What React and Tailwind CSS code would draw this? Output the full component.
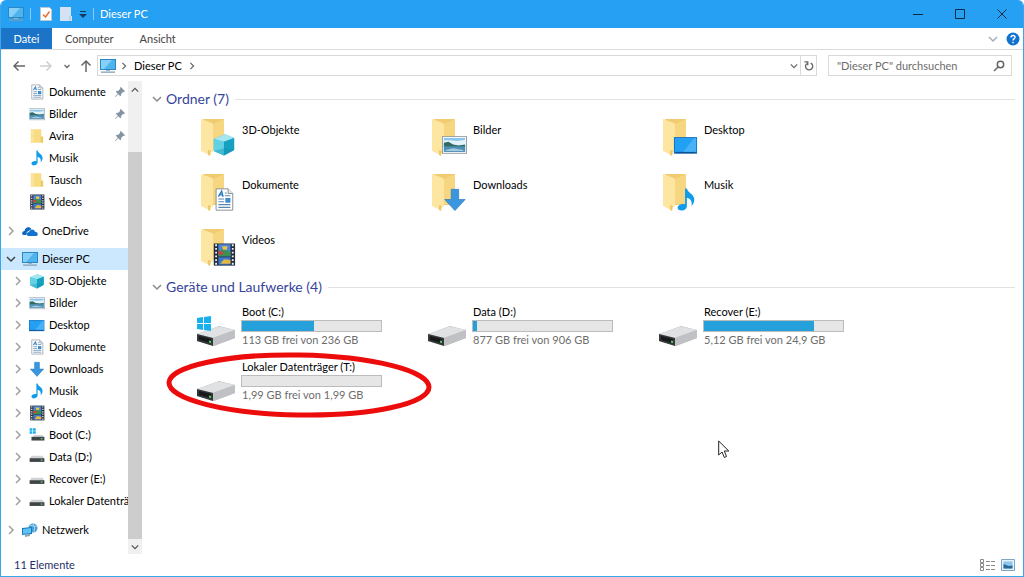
import React, { useState } from "react";

const quickAccess = [
  { name: "Dokumente", icon: "doc", pinned: true },
  { name: "Bilder", icon: "picture", pinned: true },
  { name: "Avira", icon: "folder", pinned: true },
  { name: "Musik", icon: "music" },
  { name: "Tausch", icon: "folder" },
  { name: "Videos", icon: "video" },
];

const pcChildren = [
  { name: "3D-Objekte", icon: "cube" },
  { name: "Bilder", icon: "picture" },
  { name: "Desktop", icon: "desktop" },
  { name: "Dokumente", icon: "doc" },
  { name: "Downloads", icon: "download" },
  { name: "Musik", icon: "music" },
  { name: "Videos", icon: "video" },
  { name: "Boot (C:)", icon: "bootDrive" },
  { name: "Data (D:)", icon: "drive" },
  { name: "Recover (E:)", icon: "drive" },
  { name: "Lokaler Datenträger (T:)", icon: "drive" },
];

const folders = [
  { name: "3D-Objekte", icon: "cube" },
  { name: "Bilder", icon: "picture" },
  { name: "Desktop", icon: "desktop" },
  { name: "Dokumente", icon: "doc" },
  { name: "Downloads", icon: "download" },
  { name: "Musik", icon: "music" },
  { name: "Videos", icon: "video" },
];

const drives = [
  { name: "Boot (C:)", free: "113 GB frei von 236 GB", used: 52, windows: true },
  { name: "Data (D:)", free: "877 GB frei von 906 GB", used: 3 },
  { name: "Recover (E:)", free: "5,12 GB frei von 24,9 GB", used: 79 },
  { name: "Lokaler Datenträger (T:)", free: "1,99 GB frei von 1,99 GB", used: 0, marked: true },
];

function Chevron({ dir = "right", className = "size-2.5" }) {
  const paths = {
    right: "M3 1l4 4-4 4",
    down: "M1 3l4 4 4-4",
    up: "M1 7l4-4 4 4",
  };
  return (
    <svg viewBox="0 0 10 10" className={`shrink-0 ${className}`} fill="none" stroke="currentColor">
      <path d={paths[dir]} strokeWidth="1.5" />
    </svg>
  );
}

function MonitorIcon({ className }) {
  return (
    <svg viewBox="0 0 16 16" className={className}>
      <rect x="0.5" y="1.5" width="15" height="10" fill="#4fb3ee" stroke="#2b87c4" />
      <path d="M1 2h11l-8 9H1z" fill="#84d0f8" />
      <path d="M6 12h4v1H6z" fill="#9db4c4" />
      <path d="M1 13.5h14v1.2H1z" fill="#7c9db3" />
    </svg>
  );
}

// Drawn on a 24x24 grid, used both in the tree and over the large folders
const glyphs = {
  cube: (
    <>
      <path d="M1 6l12-5 10 4v13l-11 6-11-5z" fill="#35bdd6" />
      <path d="M1 6l12-5 10 4-11 4z" fill="#a5e7f1" />
      <path d="M1 6l11 3v15l-11-5z" fill="#62d1e3" />
      <path d="M12 9l11-4v13l-11 6z" fill="#18a0c0" />
      <path d="M12 16l11 2-11 6-11-5z" fill="#0b8fb2" opacity=".35" />
    </>
  ),
  picture: (
    <>
      <rect x="-1.5" y="3.5" width="26" height="18" fill="#fff" stroke="#8d9aa3" />
      <path d="M0 5h23v15H0z" fill="#8cc6ec" />
      <path d="M0 8c6-2 11 2 23-1v6H0z" fill="#e4f2f9" />
      <path d="M0 10l5-1 5 3 6 1 7-1v3H0z" fill="#2f6b62" />
      <path d="M0 14h23v6H0z" fill="#508fb5" />
      <path d="M2 18l8-2 11 2v1H2z" fill="#a2cbdd" />
    </>
  ),
  desktop: (
    <>
      <rect x="-1" y="4" width="25" height="18" fill="#1b6fb7" />
      <path d="M0 5h23v15H0z" fill="#22a0f4" />
      <path d="M9 20L21 5h2v15z" fill="#48b2f9" />
      <path d="M1 20h21v1H1z" fill="#0e4c86" />
    </>
  ),
  doc: (
    <>
      <path d="M3.500 0.500h13l5 5v18h-18z" fill="#fff" stroke="#7f8a92" />
      <path d="M16.500 0.500v5h5" fill="#e5eaee" stroke="#7f8a92" />
      <path d="M6 9l3.500-6L11 9M7.500 7h3" fill="none" stroke="#2e7fc4" strokeWidth="1.600" />
      <path d="M13 5h2M13 8h6M6 11.500h6M6 14.500h6M6 17.500h13M6 20.500h13" stroke="#5c88b0" strokeWidth="1.200" />
      <path d="M13.500 10.500h5.500v5h-5.500z" fill="#3f8ccb" />
    </>
  ),
  download: (
    <path d="M8 1h8v11h7L12 24 1 12h7z" fill="#3b96e0" stroke="#2374bd" strokeWidth=".7" />
  ),
  music: (
    <path
      d="M11 0h2c1 5 8 6 8 12 0 3-1 5-3 7 1-5-1-8-5-9v9c0 3-3 5-6 5-2.500 0-4-1.500-4-3 0-3 4-5 8-4z"
      fill="#129bea"
    />
  ),
  video: (
    <>
      <path d="M1 0h23v24H1z" fill="#252c3b" />
      <path d="M6 1h13v13H6z" fill="#4b86d8" />
      <path d="M6 15h13v8H6z" fill="#3a78cf" />
      <path d="M6 9l5-3 8 3v5H6z" fill="#3d9051" />
      <path d="M10 3h6l-1 4h-4z" fill="#edc34a" />
      <path d="M6 8l5 1v3H6z" fill="#cf4141" />
      <path d="M8 22l4-5 7 1v4z" fill="#e3b744" />
      <path d="M3.500 1v22M21.500 1v22" stroke="#eef2f5" strokeWidth="2" strokeDasharray="2 2" />
    </>
  ),
  folder: (
    <>
      <path d="M2 1h17v22H2z" fill="#f8dc83" />
      <path d="M18 13h4v10h-4z" fill="#efca63" />
      <path d="M2 1h5v22H2z" fill="#fbe49a" />
    </>
  ),
  drive: (
    <>
      <path d="M3 10h18l3 5H0z" fill="#d0d3d5" />
      <path d="M0 14h24v6H0z" fill="#3f4447" />
      <path d="M18 16h3v2h-3z" fill="#5ed17c" />
    </>
  ),
  bootDrive: (
    <>
      <path d="M0 1h4v4H0zM5 1h5v4H5zM0 6h4v4H0zM5 6h5v4H5z" fill="#1fb0ee" />
      <path d="M7 12h14l3 4H4z" fill="#d0d3d5" />
      <path d="M3 15h21v6H3z" fill="#3f4447" />
      <path d="M18 17h3v2h-3z" fill="#5ed17c" />
    </>
  ),
};

function SmallIcon({ name }) {
  return (
    <svg viewBox="-1 0 26 24" className="size-4 shrink-0">
      {glyphs[name]}
    </svg>
  );
}

function FolderIcon({ name }) {
  return (
    <svg viewBox="0 0 40 42" className="h-[42px] w-10 shrink-0">
      <path d="M3 2h21v31H8z" fill="#f0cb70" />
      <path d="M13 7L24 2v30H13z" fill="#f6d680" />
      <path d="M1 2l11 4c1 1 1 2 1 3v26l-3-1-1 4L1 34z" fill="#fce6a2" />
      <path d="M8 33l3 1-1 5-2-1z" fill="#f0c966" />
      <svg x="11" y="15" width="25" height="25" viewBox="-2 0 27 24">
        {glyphs[name]}
      </svg>
    </svg>
  );
}

function DriveIcon({ windows }) {
  return (
    <svg viewBox="0 0 40 32" className="h-8 w-10 shrink-0">
      <path d="M1 18l22-8 16 4v8L18 30 1 25z" fill="#b9bcbf" />
      <path d="M1 18l20-7q2-.6 4 0l14 3-22 8z" fill="#dfe1e3" />
      <path d="M17 22l22-8v8l-22 8z" fill="#bfc1c4" />
      <path d="M1 18l16 4v8L1 25z" fill="#34383a" />
      <path d="M3 20l12 3v4L3 24z" fill="#17191a" />
      <path d="M13 24.500l2 .5v2l-2-.5z" fill="#55d95f" />
      {windows && (
        <path d="M1 2l6-1v6H1zM8 1l7-1v7H8zM1 8h6v6l-6-1zM8 8h7v7l-7-1z" fill="#16b1ee" />
      )}
    </svg>
  );
}

function Pin() {
  return (
    <svg viewBox="0 0 12 12" className="ml-auto mr-[3px] size-2.5 shrink-0" fill="#8393a3">
      <path d="M7 0l5 5-1 1-1-.3L7.500 8l-.2 2.300-1 .7L4 8.600.5 12 0 11.500 3.400 8 1 5.700l.7-1L4 4.500 6.300 2 6 1z" />
    </svg>
  );
}

function TreeItem({ name, icon, pinned, level = 1, expandable = true, open, selected }) {
  return (
    <button
      type="button"
      className={`flex h-[22px] w-full items-center overflow-hidden text-left whitespace-nowrap ${
        level === 0 ? "pl-[5px]" : "pl-3"
      } ${selected ? "bg-[#cce8ff]" : "hover:bg-[#e5f3ff]"}`}
    >
      {expandable ? (
        <Chevron
          dir={open ? "down" : "right"}
          className={open ? "size-2.5 text-[#404040]" : "size-2.5 text-[#a0a0a0]"}
        />
      ) : (
        <span className="w-2.5 shrink-0" />
      )}
      <span className="mr-1 ml-1.5 flex shrink-0">
        {icon === "pc" && <MonitorIcon className="size-4" />}
        {icon === "onedrive" && (
          <svg viewBox="0 0 16 16" className="size-4">
            <path d="M1 12c-1.500-1-1-4 1.500-4 .5-4 5-5 7-2l-3 2c-2 1-2.500 3-1.500 4z" fill="#0f68bd" />
            <path d="M6 13c-2-1-1.500-4 1-4 1-3 5-3.500 6-.3 3 0 3.500 3.500 1.500 4.300z" fill="#0f73cf" />
          </svg>
        )}
        {icon === "network" && (
          <svg viewBox="0 0 16 16" className="size-4">
            <circle cx="11" cy="6" r="4.500" fill="#4a9fd8" />
            <path d="M8 3q4 2 7 1M11 2q3 4 1 8" stroke="#a5d8f3" fill="none" />
            <path d="M0 6l10-1v7l-10 1z" fill="#1e78b8" />
            <path d="M1 7l8-1v5l-8 1z" fill="#5cc3f5" />
            <path d="M3 13l5-1v2l-5 1z" fill="#86a7ba" />
          </svg>
        )}
        {glyphs[icon] && <SmallIcon name={icon} />}
      </span>
      <span>{name}</span>
      {pinned && <Pin />}
    </button>
  );
}

function TitleBar() {
  return (
    <header className="flex h-7 items-center bg-[#26a0f2] pl-[7px] text-white">
      <MonitorIcon className="size-4" />
      <span className="ml-1.5 h-3 w-px bg-[#8bcbf7]" />
      <button type="button" aria-label="Eigenschaften" className="ml-[9px]">
        <svg viewBox="0 0 12 14" className="h-3.5 w-3">
          <path d="M.5.5h9l2 2v11H.5z" fill="#fff" stroke="#b7c9d8" />
          <path d="M3 7.500l2.500 2.500L9.500 4.500" fill="none" stroke="#e8743b" strokeWidth="1.600" />
        </svg>
      </button>
      <button type="button" aria-label="Neuer Ordner" className="ml-2">
        <svg viewBox="0 0 12 14" className="h-3.5 w-3">
          <path d="M0 0h11v9h1v5H0z" fill="#d5e2f3" />
          <path d="M9 9h2v5H9z" fill="#bdd1e9" />
        </svg>
      </button>
      <button type="button" aria-label="Symbolleiste anpassen" className="ml-[7px]">
        <svg viewBox="0 0 8 8" className="size-2" fill="#123a5c">
          <path d="M1 1h6v1H1zM0 4h8L4 8z" />
        </svg>
      </button>
      <span className="ml-1.5 h-3 w-px bg-[#8bcbf7]" />
      <h1 className="ml-1.5">Dieser PC</h1>
      <div className="ml-auto flex text-[#10293d]">
        <button type="button" aria-label="Minimieren" className="flex h-7 w-[42px] items-center justify-center">
          <svg viewBox="0 0 10 10" className="size-2.5">
            <path d="M0 5.500h10" stroke="currentColor" />
          </svg>
        </button>
        <button type="button" aria-label="Maximieren" className="flex h-7 w-[42px] items-center justify-center">
          <svg viewBox="0 0 10 10" className="size-2.5">
            <path d="M.5.5h9v9h-9z" stroke="currentColor" fill="none" />
          </svg>
        </button>
        <button type="button" aria-label="Schließen" className="flex h-7 w-[42px] items-center justify-center">
          <svg viewBox="0 0 10 10" className="size-2.5">
            <path d="M.5.5l9 9M9.500.5l-9 9" stroke="currentColor" />
          </svg>
        </button>
      </div>
    </header>
  );
}

function Ribbon() {
  return (
    <nav className="flex h-[22px] items-stretch border-b border-[#dadbdc] text-[#444]">
      <button type="button" className="w-[51px] bg-[#1b74c8] text-white">
        Datei
      </button>
      <button type="button" className="ml-[13px]">
        Computer
      </button>
      <button type="button" className="ml-[26px]">
        Ansicht
      </button>
      <button type="button" aria-label="Menüband erweitern" className="ml-auto text-[#a3afba]">
        <Chevron dir="down" />
      </button>
      <button type="button" aria-label="Hilfe" className="mr-[3px] ml-2">
        <svg viewBox="0 0 14 14" className="size-3.5">
          <circle cx="7" cy="7" r="6.500" fill="#1272cf" />
          <path d="M5 5.500c0-3 4.500-2.500 4 0C8.800 6.700 7 6.700 7 8.500M7 9.700v1.500" fill="none" stroke="#fff" strokeWidth="1.400" />
        </svg>
      </button>
    </nav>
  );
}

function AddressRow() {
  const [query, setQuery] = useState("");

  return (
    <div className="flex h-[31px] shrink-0 items-center pr-[11px] pl-3 text-[#666]">
      <button type="button" aria-label="Zurück">
        <svg viewBox="0 0 12 12" className="size-3" fill="none" stroke="currentColor" strokeWidth="1.500">
          <path d="M12 6H1M5.500 1.500L1 6l4.500 4.500" />
        </svg>
      </button>
      <button type="button" aria-label="Vorwärts" className="ml-[15px] text-[#cfcfcf]">
        <svg viewBox="0 0 12 12" className="size-3" fill="none" stroke="currentColor" strokeWidth="1.500">
          <path d="M0 6h11M6.500 1.500L11 6l-4.500 4.500" />
        </svg>
      </button>
      <button type="button" aria-label="Verlauf" className="ml-[11px]">
        <svg viewBox="0 0 8 8" className="size-2" fill="none" stroke="currentColor">
          <path d="M1.500 3L4 5.500 6.500 3" strokeWidth="1.300" />
        </svg>
      </button>
      <button type="button" aria-label="Nach oben" className="ml-[9px]">
        <svg viewBox="0 0 12 12" className="size-3" fill="none" stroke="currentColor" strokeWidth="1.500">
          <path d="M6 12V1M1.500 5.500L6 1l4.500 4.500" />
        </svg>
      </button>
      <div className="ml-[5px] flex h-[21px] flex-1 items-center border border-[#d9d9d9] pl-0.5">
        <MonitorIcon className="size-4" />
        <Chevron className="ml-1 size-2" />
        <button type="button" className="ml-1.5 text-black">
          Dieser PC
        </button>
        <Chevron className="ml-1.5 size-2" />
        <button type="button" aria-label="Adressverlauf" className="mr-0.5 ml-auto">
          <Chevron dir="down" className="size-2" />
        </button>
        <button
          type="button"
          aria-label="Aktualisieren"
          className="flex h-full w-4 items-center justify-center border-l border-[#d9d9d9]"
        >
          <svg viewBox="0 0 12 12" className="size-2.5" fill="none" stroke="currentColor" strokeWidth="1.600">
            <path d="M8 2.500A4.300 4.300 0 1 1 3.500 3M.5 1h4v4" />
          </svg>
        </button>
      </div>
      <label className="ml-[11px] flex h-[21px] w-[184px] items-center border border-[#d9d9d9] pr-1.5 pl-2">
        <input
          type="text"
          aria-label="Dieser PC durchsuchen"
          value={query}
          onChange={(e) => setQuery(e.target.value)}
          placeholder={'"Dieser PC" durchsuchen'}
          className="min-w-0 flex-1 outline-none placeholder:text-[#6d6d6d]"
        />
        <svg viewBox="0 0 12 12" className="size-3" fill="none" stroke="currentColor" strokeWidth="1.500">
          <circle cx="7.500" cy="4.500" r="3.200" />
          <path d="M5 7L1 11" />
        </svg>
      </label>
    </div>
  );
}

function Sidebar() {
  return (
    <aside className="flex w-[141px] shrink-0">
      <nav className="min-w-0 flex-1">
        {quickAccess.map((item) => (
          <TreeItem key={item.name} {...item} expandable={false} />
        ))}
        <div className="mt-[7px]">
          <TreeItem name="OneDrive" icon="onedrive" level={0} />
        </div>
        <div className="mt-1.5">
          <TreeItem name="Dieser PC" icon="pc" level={0} open selected />
          {pcChildren.map((item) => (
            <TreeItem key={item.name} {...item} />
          ))}
        </div>
        <div className="mt-[7px]">
          <TreeItem name="Netzwerk" icon="network" level={0} />
        </div>
      </nav>
      <div className="flex w-3.5 flex-col items-center bg-[#f0f0f0] text-[#505050]">
        <button type="button" aria-label="Nach oben blättern" className="flex h-[18px] items-center">
          <Chevron dir="up" className="size-2" />
        </button>
        <div className="mt-[53px] w-full flex-1 bg-[#cdcdcd]" />
        <button type="button" aria-label="Nach unten blättern" className="flex h-[15px] items-center">
          <Chevron dir="down" className="size-2" />
        </button>
      </div>
    </aside>
  );
}

function GroupHeading({ children }) {
  return (
    <div className="flex h-5 items-center">
      <Chevron dir="down" className="size-2.5 text-[#8a8a8a]" />
      <h2 className="ml-1 text-sm text-[#36459b]">{children}</h2>
      <span className="ml-1.5 h-px flex-1 bg-[#e2e2e2]" />
    </div>
  );
}

function DriveTile({ name, free, used, windows, marked }) {
  return (
    <button type="button" className="relative flex h-[55px] items-start text-left">
      <span className="mt-3 mr-[5px] flex">
        <DriveIcon windows={windows} />
      </span>
      <span className="flex w-[141px] flex-col">
        <span className="pl-px leading-4">{name}</span>
        <span className="flex h-3 border border-[#bcbcbc] bg-[#e6e6e6]">
          <span className="bg-[#26a0da]" style={{ width: `${used}%` }} />
        </span>
        <span className="pl-px leading-4 text-[#6d6d6d]">{free}</span>
      </span>
      {marked && (
        <svg
          viewBox="0 0 266 68"
          className="pointer-events-none absolute -top-2 -left-[30px] h-[68px] w-[266px]"
          fill="none"
        >
          <ellipse cx="133" cy="34" rx="130" ry="30" stroke="#ed0c0c" strokeWidth="5" transform="rotate(1 133 34)" />
        </svg>
      )}
    </button>
  );
}

function Content() {
  return (
    <main className="relative min-w-0 flex-1 pt-2 pr-2 pl-2.5">
      <section>
        <GroupHeading>Ordner (7)</GroupHeading>
        <div className="mt-2 grid grid-cols-[repeat(auto-fill,231px)] pl-12">
          {folders.map((folder) => (
            <button key={folder.name} type="button" className="flex h-[55px] items-start text-left">
              <FolderIcon name={folder.icon} />
              <span className="mt-[5px] ml-0.5 leading-4">{folder.name}</span>
            </button>
          ))}
        </div>
      </section>
      <section className="-mt-[5px]">
        <GroupHeading>Geräte und Laufwerke (4)</GroupHeading>
        <div className="mt-[7px] grid grid-cols-[repeat(auto-fill,231px)] pl-11">
          {drives.map((drive) => (
            <DriveTile key={drive.name} {...drive} />
          ))}
        </div>
      </section>
      <svg viewBox="0 0 12 19" className="absolute top-[359px] left-[576px] h-[19px] w-3">
        <path d="M.7 1v14l3.300-3 2.300 5.500 2.200-1L6.300 11h4.500z" fill="#fff" stroke="#222" />
      </svg>
    </main>
  );
}

export default function App() {
  return (
    <div className="flex min-h-screen flex-col overflow-hidden rounded-t-md border-x border-b border-[#3ba5ec] bg-white font-['Lato','Open_Sans',sans-serif] text-[11px] leading-4 text-black">
      <TitleBar />
      <Ribbon />
      <AddressRow />
      <div className="flex flex-1">
        <Sidebar />
        <Content />
      </div>
      <footer className="flex h-[22px] items-center pr-2 pl-[13px] text-[#1f3268]">
        <span>11 Elemente</span>
        <button type="button" aria-label="Details" className="ml-auto">
          <svg viewBox="0 0 16 12" className="h-3 w-4" fill="none" stroke="#8a8a8a">
            <path d="M.5.5h3v3h-3zM.5 4.500h3v3h-3zM.5 8.500h3v3h-3z" />
            <path d="M6 2.500h4M11 2.500h4M6 6.500h4M11 6.500h4M6 10.500h4M11 10.500h4" />
          </svg>
        </button>
        <button type="button" aria-label="Große Symbole" className="ml-[5px]">
          <svg viewBox="0 0 14 12" className="h-3 w-3.5">
            <path d="M.5.5h13v11H.5z" fill="#e3f2fc" stroke="#7fa6c4" />
            <path d="M2.500 2.500h9v7h-9z" fill="#8ac6ee" />
            <path d="M2.500 5l5 2 4-.5v3h-9z" fill="#2c6691" />
          </svg>
        </button>
      </footer>
    </div>
  );
}
